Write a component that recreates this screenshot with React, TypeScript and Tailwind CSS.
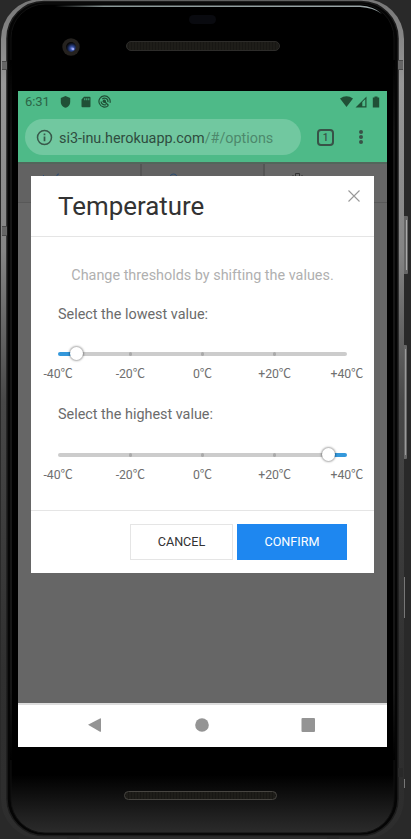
import React from 'react';

const marks = ['-40', '-20', '0', '+20', '+40'];

function PhoneBody() {
  return (
    <svg className="absolute inset-0" width="411" height="839" viewBox="0 0 411 839" aria-hidden="true">
      <defs>
        <linearGradient id="rim" x1="0" y1="0" x2="0" y2="1">
          <stop offset="0" stopColor="#777" />
          <stop offset="0.1" stopColor="#989898" />
          <stop offset="0.3" stopColor="#858585" />
          <stop offset="0.48" stopColor="#484848" />
          <stop offset="0.8" stopColor="#303030" />
          <stop offset="1" stopColor="#2d2d2d" />
        </linearGradient>
        <linearGradient id="face" x1="0" y1="0" x2="0" y2="1">
          <stop offset="0" stopColor="#000" />
          <stop offset="0.93" stopColor="#000" />
          <stop offset="0.98" stopColor="#202020" />
          <stop offset="1" stopColor="#2b2b2b" />
        </linearGradient>
        <linearGradient id="shine" x1="0" y1="0" x2="1" y2="0">
          <stop offset="0" stopColor="#000" />
          <stop offset="0.15" stopColor="#8b9898" />
          <stop offset="1" stopColor="#9ba6a8" />
        </linearGradient>
        <linearGradient id="side" x1="0" y1="0" x2="0" y2="1">
          <stop offset="0" stopColor="#000" />
          <stop offset="0.12" stopColor="#161616" />
          <stop offset="0.9" stopColor="#161616" />
          <stop offset="1" stopColor="#000" />
        </linearGradient>
        <radialGradient id="lens" cx="0.6" cy="0.65" r="0.6">
          <stop offset="0" stopColor="#8190e0" />
          <stop offset="0.35" stopColor="#314995" />
          <stop offset="0.75" stopColor="#111934" />
          <stop offset="1" stopColor="#080808" />
        </radialGradient>
        <pattern id="mesh" width="3" height="4" patternUnits="userSpaceOnUse">
          <rect width="3" height="4" fill="#181714" />
          <path d="M1 0v4" stroke="#24221d" />
        </pattern>
      </defs>
      <rect x="402" y="216" width="6" height="58" rx="1" fill="#666" />
      <path d="M406.500 220v50" stroke="#aaa" />
      <rect x="402" y="345" width="5" height="114" rx="1" fill="#666" />
      <path d="M405.500 349v106" stroke="#999" />
      <path d="M404.500 577v41M404.500 779v9" stroke="#777" />
      <rect x="1" y="-1" width="403" height="840" rx="40" fill="url(#rim)" />
      <rect x="7" y="1.500" width="391" height="834" rx="37" fill="#050505" stroke="#1c1c1c" strokeWidth="1.500" />
      <rect x="11" y="4" width="383" height="829" rx="34" fill="url(#face)" stroke="#111" strokeWidth="1" />
      <rect x="10" y="60" width="2" height="700" fill="url(#side)" />
      <rect x="393" y="60" width="2" height="700" fill="url(#side)" />
      <path d="M55 5.500H360Q374 6 382 14Q373 7.500 360 7H55Z" fill="url(#shine)" />
      <path d="M2 61h5v9H2zM398 61h5v9h-5zM2 226h5v10H2z" fill="#666" />
      <path d="M2 61.500h5M2 69.500h5M398 60.500h5M398 69.500h5M2 226.500h5M2 235.500h5" stroke="#4b4b4b" />
      <path d="M398 768h5v9h-5zM67 837h12v2H67zM327 837h12v2h-12z" fill="#292929" />
      <rect x="189" y="15" width="27" height="9" rx="4.500" fill="#090a0f" />
      <circle cx="71" cy="47" r="8.700" fill="#25221f" />
      <circle cx="71" cy="47" r="5" fill="url(#lens)" />
      <circle cx="73" cy="49" r="1.300" fill="#9ba8f5" />
      <rect x="126.500" y="41.500" width="153" height="9" rx="4.500" fill="url(#mesh)" stroke="#2d2c2a" />
      <rect x="124.500" y="791.500" width="152" height="8" rx="4" fill="url(#mesh)" stroke="#474541" />
    </svg>
  );
}

function StatusBar() {
  return (
    <div className="flex h-[22px] items-center pl-[7px] pr-[7px] text-[#205036]">
      <span className="w-[34px] text-[13px] leading-[22px] tracking-[-0.1px] text-[#2c6546]">6:31</span>
      <svg className="ml-px" width="11" height="12" viewBox="0 0 11 12" fill="currentColor"><path d="M5.500 0 10.200 2v4c0 2.800-2.200 5.200-4.700 5.800C3 11.200.8 8.800.8 6V2Z" /></svg>
      <svg className="ml-[10px]" width="10" height="12" viewBox="0 0 10 12" fill="currentColor"><path fillRule="evenodd" d="M3 .8h5.500q1 0 1 1v8.500q0 1-1 1h-7q-1 0-1-1V3.500ZM3.300 2.200v2h1v-2Zm2 0v2h1v-2Zm2 0v2h1v-2Z" /></svg>
      <svg className="-mt-px ml-[7px]" width="13" height="13" viewBox="0 0 13 13" fill="none" stroke="currentColor"><path d="M10.300 10.600A5.600 5.600 0 1 1 12 7.800" strokeWidth="1.200" /><path d="M4.300 4A3.400 3.400 0 0 1 9.900 7.200M3.100 6.500a3.400 3.400 0 0 0 4.800 3.100" strokeWidth="1.200" /><path d="m6 6 4.500 4.500" strokeWidth="1.400" /><circle cx="6.300" cy="6.300" r="1.700" fill="currentColor" stroke="none" /></svg>
      <div className="-mt-px ml-auto flex items-center">
        <svg width="13" height="11" viewBox="0 0 13 11" fill="currentColor"><path d="M0 2.500Q6.500-2 13 2.500L6.500 11Z" /></svg>
        <svg className="ml-[2px]" width="12" height="12" viewBox="0 0 12 12" fill="currentColor"><path fillRule="evenodd" d="M11.500.5v11H.5ZM7.300 6v4.300h3V3Z" /></svg>
        <svg className="ml-[5px]" width="8" height="12" viewBox="0 0 8 12" fill="currentColor"><path d="M2.500.5h3v1h1.700v10H.8v-10h1.700Z" /></svg>
      </div>
    </div>
  );
}

function AddressBar() {
  return (
    <div className="flex h-[49px] items-start pl-[7px] pt-[6px]">
      <div className="flex h-9 w-[276px] items-center rounded-full bg-[#71c8a0] pl-[11px]">
        <svg width="17" height="17" viewBox="0 0 17 17" fill="none" stroke="#38584a" strokeWidth="1.500"><circle cx="8.500" cy="8.500" r="7" /><path d="M8.500 7.500v4.700M8.500 4.600v1.600" strokeWidth="1.700" /></svg>
        <span className="ml-[6px] mt-[3px] whitespace-nowrap text-[14.4px] leading-5 tracking-[-0.02px] text-[#2f4d3f]">si3-inu.herokuapp.com<span className="text-[#4d886c]">/#/options</span></span>
      </div>
      <div className="ml-4 mt-[10px] flex h-[17px] w-[17px] items-center justify-center rounded-[4px] border-2 border-[#385247] text-[10px] font-medium leading-none text-[#385247]">1</div>
      <div className="ml-[25px] mt-[11px] flex flex-col gap-[1px]">
        <i className="h-[4px] w-[4px] rounded-full bg-[#385247]" />
        <i className="h-[4px] w-[4px] rounded-full bg-[#385247]" />
        <i className="h-[4px] w-[4px] rounded-full bg-[#385247]" />
      </div>
    </div>
  );
}

function Slider({ high = false }: { high?: boolean }) {
  return (
    <div>
      <div className={high ? 'relative h-[3.500px] rounded-sm bg-[linear-gradient(to_right,#ccc_94%,#3498db_94%)]' : 'relative h-[3.500px] rounded-sm bg-[linear-gradient(to_right,#3498db_6.25%,#ccc_6.25%)]'}>
        <i className="absolute left-[70.500px] top-0 h-[3.500px] w-[3.500px] rounded-full bg-[#aaa]" />
        <i className="absolute left-[142.500px] top-0 h-[3.500px] w-[3.500px] rounded-full bg-[#aaa]" />
        <i className="absolute left-[214.500px] top-0 h-[3.500px] w-[3.500px] rounded-full bg-[#aaa]" />
        <i className={high ? 'absolute left-[264px] top-[-5px] h-[13px] w-[13px] rounded-full bg-white shadow-[0_0_2px_1px_rgba(0,0,0,0.34)]' : 'absolute left-[11.500px] top-[-5px] h-[13px] w-[13px] rounded-full bg-white shadow-[0_0_2px_1px_rgba(0,0,0,0.34)]'} />
      </div>
      <div className="-mx-[36px] mt-[10.500px] grid grid-cols-5 text-center text-[12.300px] leading-[16px] text-[#707070]">
        {marks.map((m) => <span key={m} className="tracking-[-0.1px]">{m}℃</span>)}
      </div>
    </div>
  );
}

function TemperatureDialog() {
  return (
    <section className="absolute left-[13px] top-[14px] flex h-[397px] w-[343px] flex-col bg-white">
      <header className="flex h-[61px] justify-between border-b border-[#e5e5e5] pl-[27px] pr-[14px]">
        <h1 className="pt-[12px] text-[25.900px] leading-9 text-[#333]">Temperature</h1>
        <svg className="mt-[14px]" width="12" height="12" viewBox="0 0 12 12" fill="none" stroke="#999" strokeWidth="1.100"><path d="m.5.5 11 11m0-11-11 11" /></svg>
      </header>
      <div className="h-[273px] px-[27px] pt-[28px] text-[14.4px] leading-[22px] text-[#6b6b6b]">
        <p className="whitespace-nowrap text-center text-[#b0b0b0]">Change thresholds by shifting the values.</p>
        <p className="mb-[26px] mt-[17px]">Select the lowest value:</p>
        <Slider />
        <p className="mb-[27px] mt-[22px]">Select the highest value:</p>
        <Slider high />
      </div>
      <footer className="flex flex-1 justify-end gap-[4px] border-t border-[#e5e5e5] pr-[27px] pt-[13px] text-[12.600px]">
        <button className="h-9 w-[103px] border border-[#e5e5e5] text-[#333]">CANCEL</button>
        <button className="h-9 w-[110px] bg-[#1e87f0] text-white">CONFIRM</button>
      </footer>
    </section>
  );
}

export default function App() {
  return (
    <main className="relative h-[839px] w-[411px] overflow-hidden bg-[#292929] pl-[18px] pt-[91px] font-['Roboto','Noto_Sans_CJK_SC',sans-serif]">
      <PhoneBody />
      <div className="relative flex h-[656px] w-[369px] flex-col bg-[#4eba88]">
        <StatusBar />
        <AddressBar />
        <div className="relative h-[541px] bg-[#666]">
          <div className="flex h-[41px] border-b border-t-2 border-b-[#585858] border-t-[#52665b] bg-[#626262]">
            <div className="w-[124px] border-r-2 border-[#555]">
              <svg className="ml-[24px] mt-[9px]" width="30" height="6" fill="none" stroke="#294a73"><path d="M1.500 2v3M15 5V2q0-1 2-1" /></svg>
            </div>
            <div className="w-[123px] border-r-2 border-[#555]">
              <svg className="ml-[27px] mt-[8px]" width="10" height="8" fill="none" stroke="#294a73"><path d="M1.500 8V4q0-2 3-2t3 2v4" /></svg>
            </div>
            <div className="flex-1 bg-[#666]">
              <svg className="ml-[27px] mt-[8px]" width="12" height="8" fill="none" stroke="#333"><path d="M3.500 8V1.500h4V8M0 4h2M9 4h2" /></svg>
            </div>
          </div>
          <TemperatureDialog />
        </div>
        <nav className="relative h-11 border-t-2 border-[#ddd] bg-white">
          <svg width="369" height="42" fill="#949494"><path d="M83 14q0-1-1-.5l-12 6.200 12 7q1 .5 1-.5Z" /><circle cx="184" cy="20" r="6.800" /><rect x="283.500" y="13" width="13.500" height="14" rx="1" /></svg>
        </nav>
      </div>
    </main>
  );
}
